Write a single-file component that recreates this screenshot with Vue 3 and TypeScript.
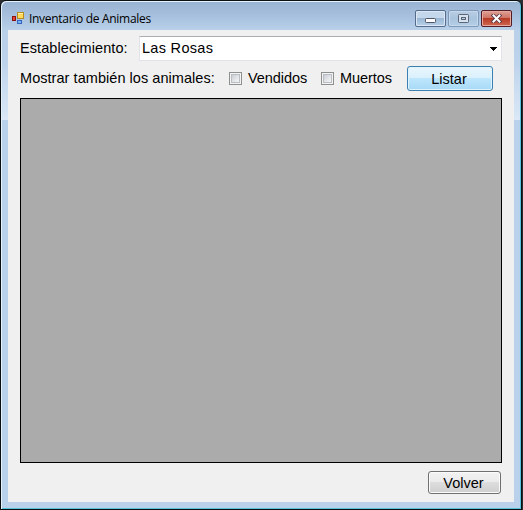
<script setup lang="ts">
import { ref } from 'vue'

const establishment = ref('Las Rosas')
const filters = ref([
  { label: 'Vendidos', checked: false },
  { label: 'Muertos', checked: false },
])
</script>

<template>
  <div class="desktop">
    <div class="window">
      <header class="titlebar">
        <svg class="app-icon" width="14" height="14" viewBox="0 0 14 14">
          <rect x="0.5" y="4.5" width="3" height="4" fill="#e0452c" stroke="#8f1410" />
          <rect x="5.5" y="0.5" width="6" height="6" fill="#ffd95b" stroke="#b58a20" />
          <path d="M6 1.5h5" stroke="#fff0a8" />
          <rect x="5.5" y="8.5" width="4" height="3" fill="#79b4f5" stroke="#3563bd" />
        </svg>
        <h1 class="title">Inventario de Animales</h1>
        <div class="controls">
          <button class="ctl" aria-label="Minimizar">
            <svg width="11" height="5" viewBox="0 0 11 5">
              <rect x="0.5" y="0.5" width="10" height="4" rx="0.8" fill="#fff" stroke="#535666" />
            </svg>
          </button>
          <button class="ctl disabled" aria-label="Maximizar">
            <svg width="11" height="9" viewBox="0 0 11 9">
              <rect x="0.5" y="0.5" width="10" height="8" rx="0.8" fill="#d5e2f0" stroke="#5c6475" />
              <rect x="3.5" y="3.5" width="4" height="2" fill="#b8cee4" stroke="#5c6475" />
            </svg>
          </button>
          <button class="ctl close" aria-label="Cerrar">
            <svg width="11" height="9" viewBox="0 0 11 9">
              <path d="M2.5 1.5l6 6M8.5 1.5l-6 6" stroke="#5b3a46" stroke-width="3.8" stroke-linecap="square" />
              <path d="M2.5 1.5l6 6M8.5 1.5l-6 6" stroke="#fff" stroke-width="2" stroke-linecap="square" />
            </svg>
          </button>
        </div>
      </header>
      <main class="client">
        <div class="row establishment">
          <span class="label name">Establecimiento:</span>
          <div class="combo">
            <span class="value">{{ establishment }}</span>
            <svg width="7" height="4" viewBox="0 0 7 4" shape-rendering="crispEdges">
              <path d="M0 0h7v1h-1v1h-1v1h-1v1h-1v-1h-1v-1h-1v-1h-1z" fill="#000" />
            </svg>
          </div>
        </div>
        <div class="row options">
          <span class="label show">Mostrar también los animales:</span>
          <label v-for="f in filters" :key="f.label" class="check">
            <span class="box" @click="f.checked = !f.checked"></span>
            <span class="caption">{{ f.label }}</span>
          </label>
          <button class="btn primary">Listar</button>
        </div>
        <div class="grid"></div>
        <div class="footer">
          <button class="btn back">Volver</button>
        </div>
      </main>
    </div>
  </div>
</template>

<style>
body {
  margin: 0;
  overflow: hidden;
}
</style>

<style scoped>
.desktop {
  box-sizing: border-box;
  width: 523px;
  height: 510px;
  background: #2a2e31;
  font-family: "Liberation Sans", Arial, sans-serif;
  font-size: 14.5px;
  color: #000;
}
.window {
  box-sizing: border-box;
  width: 522px;
  height: 510px;
  border: 1px solid #0b0f12;
  border-radius: 6px 6px 0 0;
  background:
    linear-gradient(#98b3d2 0, #a6c0dd 15px, #b9d0e9 29px, #bdd3eb 60px, #dae8f7 119px, #b9d1ea 119px, #b9d1ea 100%);
  box-shadow: inset 1px 1px 0 #e4f2fc, inset -1px -1px 0 #55c3dc;
  padding: 0 7px 7px;
}
.titlebar {
  display: flex;
  align-items: flex-start;
  height: 29px;
}
.app-icon {
  margin: 11px 0 0 4px;
}
.title {
  margin: 9px 0 0 3px;
  font: 12px/18px "Open Sans", "Noto Sans", sans-serif;
  letter-spacing: -0.3px;
  white-space: nowrap;
}
.controls {
  display: flex;
  gap: 2px;
  margin: 9px 2px 0 auto;
}
.ctl {
  box-sizing: border-box;
  display: flex;
  align-items: center;
  justify-content: center;
  width: 31px;
  height: 17px;
  padding: 0;
  border: 1px solid #566c8a;
  border-radius: 2px;
  background: linear-gradient(#c5d7ea 0 45%, #9bb7d3 50%, #b6d0e8);
  box-shadow: inset 0 0 0 1px #dce8f5;
}
.ctl svg {
  display: block;
}
.ctl:first-child svg {
  margin-top: 4px;
}
.ctl.disabled {
  border-color: #8099b8;
  background: linear-gradient(#b8cde3, #aac4de 50%, #b5cee7);
  box-shadow: inset 0 0 0 1px #c6d9ec;
}
.ctl.close {
  border-color: #531c25;
  background: linear-gradient(#dfa096, #ce7668 45%, #b83b26 50%, #cf6750);
  box-shadow: inset 0 0 0 1px #e6aaa1;
}
.client {
  box-sizing: border-box;
  height: 472px;
  padding: 6px 12px 0;
  background: #f0f0f0;
}
.row {
  display: flex;
  align-items: center;
}
.label,
.check {
  white-space: nowrap;
}
.establishment {
  height: 25px;
}
.name {
  width: 119px;
  padding-bottom: 2px;
  letter-spacing: 0.08px;
}
.combo {
  box-sizing: border-box;
  display: flex;
  align-items: center;
  justify-content: space-between;
  width: 363px;
  height: 25px;
  padding: 0 4px 0 2px;
  border: 1px solid #e2e3ea;
  border-top-color: #abadb3;
  background: #fff;
}
.value {
  padding-bottom: 2px;
  letter-spacing: 0.3px;
}
.options {
  height: 37px;
  align-items: flex-start;
}
.show {
  width: 209px;
  line-height: 17px;
  padding-top: 9px;
  letter-spacing: 0.05px;
}
.check {
  display: flex;
  align-items: center;
  width: 92px;
  height: 17px;
  padding-top: 9px;
  gap: 6px;
}
.check + .check {
  width: 86px;
}
.caption {
  padding-bottom: 2px;
  letter-spacing: -0.05px;
}
.box {
  box-sizing: border-box;
  width: 13px;
  height: 13px;
  border: 1px solid #8e8f8f;
  background: linear-gradient(135deg, #cbcfd5, #f6f6f6) center / 7px 7px no-repeat, #f4f4f4;
  box-shadow: inset 0 0 0 1px #f4f4f4, inset 0 0 0 2px #b9bec5;
}
.btn {
  box-sizing: border-box;
  padding: 0 2px 0 0;
  font: inherit;
  color: #000;
  border: 1px solid #707070;
  border-radius: 3px;
  background: linear-gradient(#f2f2f2, #ebebeb 49%, #dddddd 50%, #cfcfcf);
  box-shadow: inset 0 0 0 1px #fbfbfb;
}
.primary {
  width: 86px;
  height: 25px;
  margin-top: 5px;
  border-color: #3c7fb1;
  background: linear-gradient(#eaf6fd, #d9f0fc 49%, #bee6fd 50%, #a7d9f5);
  box-shadow: inset 0 0 0 1px #dff4fd;
}
.grid {
  box-sizing: border-box;
  width: 482px;
  height: 365px;
  border: 1px solid #000;
  background: #ababab;
}
.footer {
  display: flex;
  justify-content: flex-end;
  padding: 8px 1px 0 0;
}
.back {
  width: 73px;
  height: 23px;
}
</style>
